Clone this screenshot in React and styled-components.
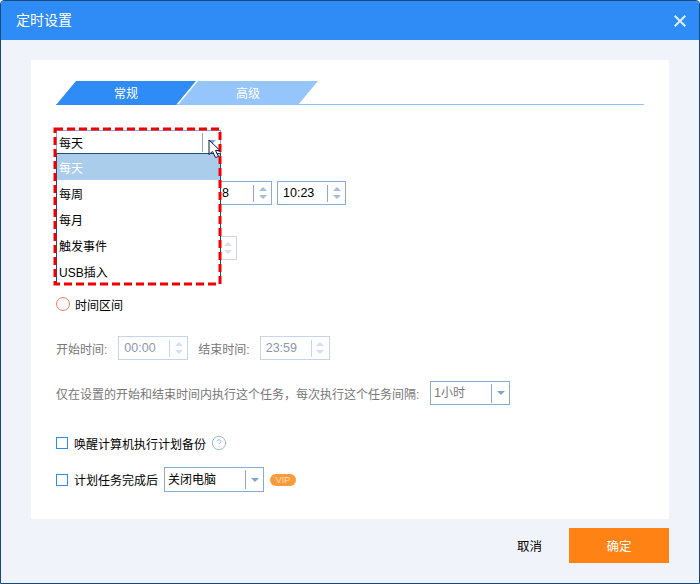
import React from "react";
import styled, { createGlobalStyle } from "styled-components";
import { CircleHelp } from "lucide-react";

const Global = createGlobalStyle`
  html, body { margin: 0; padding: 0; background: #fff; }
  body { font-family: "Liberation Sans", "Noto Sans CJK SC", sans-serif; font-size: 12px; color: #000; }
  * { box-sizing: border-box; }
`;

const Win = styled.div`
  width: 700px; height: 584px; display: flex; flex-direction: column;
  border: 1px solid #174a80; border-radius: 4px 4px 0 0; background: #f0f4fa; overflow: hidden;
`;
const TitleBar = styled.div`
  height: 39px; flex: none; background: #2f8bf6; color: #fff;
  display: flex; align-items: center; justify-content: space-between; padding: 0 13px 0 15px;
`;
const TitleText = styled.span`
  font-size: 14px; margin-top: -3px;
`;
const CloseIcon = styled.svg`
  width: 12px; height: 12px; display: block; margin-top: 1px;
`;
const Body = styled.div`
  flex: 1; display: flex; flex-direction: column; padding: 20px 30px 0;
`;
const Panel = styled.div`
  position: relative; height: 459px; flex: none; background: #fff; padding: 21px 25px 0;
`;
const Tabs = styled.div`
  display: flex; height: 24px; border-bottom: 1px solid #8fc1fa;
`;
const Tab = styled.div`
  width: 140px; height: 24px; flex: none; color: #fff; display: flex; align-items: center; justify-content: center;
  padding-bottom: 2px;
  background: ${p => (p.$active ? "#2f8bf6" : "#96c5fb")};
  clip-path: polygon(20px 0, 100% 0, 120px 100%, 0 100%);
  margin-left: ${p => (p.$active ? "0" : "-18px")};
`;
const SelectAnchor = styled.div`
  position: relative; width: 165px; height: 24px; margin-top: 25px;
`;
const Select = styled.div`
  display: flex; align-items: center; width: ${p => p.$w}px; height: ${p => p.$h || 24}px; flex: none;
  border: 1px solid #89a9d8; background: #fff; color: ${p => (p.$muted ? "#777" : "#000")};
  margin-left: ${p => p.$ml || 0}px; font-size: 12px;
`;
const SelectValue = styled.div`
  flex: 1; padding-left: ${p => p.$pl ?? 3}px; padding-top: ${p => p.$pt || 0}px; white-space: nowrap; line-height: 20px;
`;
const SelectSide = styled.div`
  width: ${p => p.$w || 19}px; height: 19px; flex: none; border-left: 1px solid #89a9d8;
  display: flex; align-items: center; justify-content: center;
`;
const Caret = styled.i`
  display: block; width: 0; height: 0; border-style: solid; border-width: 4px 4px 0 4px;
  border-color: #7fa3d7 transparent transparent transparent;
`;
const Dropdown = styled.div`
  position: absolute; left: 0; top: 23px; width: 165px; height: 131px; background: #fff;
  border: 1px solid #1f4e79; z-index: 2;
`;
const Option = styled.div`
  height: 26px; display: flex; align-items: center; padding-left: 2px; font-size: 12px;
  background: ${p => (p.$selected ? "#abcdec" : "#fff")};
  color: ${p => (p.$selected ? "#fff" : "#000")};
`;
const Marquee = styled.svg`
  position: absolute; left: 22px; top: 67px; width: 170px; height: 160px; z-index: 3; overflow: visible;
`;
const Cursor = styled.svg`
  position: absolute; left: 177px; top: 79px; width: 14px; height: 20px; z-index: 4; overflow: visible;
`;
const SpinRow = styled.div`
  display: flex; align-items: center; margin-top: ${p => p.$mt}px;
  margin-left: ${p => p.$ml || 0}px; gap: ${p => p.$gap || 0}px;
`;
const Spinner = styled.div`
  display: flex; align-items: center; height: 24px; width: ${p => p.$w}px; flex: none;
  border: 1px solid ${p => (p.$off ? "#c5d6ec" : "#89a9d8")}; background: #fff;
  color: ${p => (p.$off ? "#8d97ab" : "#000")};
  margin-left: ${p => p.$ml || 0}px;
`;
const SpinValue = styled.div`
  flex: 1; padding-left: ${p => p.$pl ?? 5}px;
  font-size: 12.5px; white-space: nowrap;
`;
const SpinSide = styled.div`
  width: 18px; height: 17px; flex: none; border-left: 1px solid ${p => (p.$off ? "#c5d6ec" : "#89a9d8")};
  display: flex; flex-direction: column; align-items: center; justify-content: center; gap: 4px;
`;
const Tri = styled.i`
  display: block; width: 0; height: 0; border-style: solid;
  border-width: ${p => (p.$up ? "0 4px 4px 4px" : "4px 4px 0 4px")};
  border-color: ${p => {
    const c = p.$off ? "#d4e0f0" : "#a3bde0";
    return p.$up ? `transparent transparent ${c} transparent` : `${c} transparent transparent transparent`;
  }};
`;
const RadioRow = styled.div`
  display: flex; align-items: center; gap: 5px; height: 14px; margin-top: 37px;
`;
const Radio = styled.span`
  width: 14px; height: 14px; border-radius: 50%; border: 1px solid #ff7a5c; background: #fff; flex: none;
`;
const Label = styled.span`
  color: ${p => (p.$muted ? "#777" : "#000")}; white-space: nowrap; font-size: 12px;
  margin-left: ${p => p.$ml || 0}px;
`;
const TimeRow = styled.div`
  display: flex; align-items: center; height: 24px; margin-top: ${p => p.$mt}px;
`;
const CheckRow = styled.div`
  display: flex; align-items: center; height: ${p => p.$h}px; margin-top: ${p => p.$mt}px;
`;
const Check = styled.span`
  width: 12px; height: 12px; border: 1px solid #2f8bf6; background: #fff; flex: none; margin-right: 6px;
`;
const Help = styled(CircleHelp)`
  width: 16px; height: 16px; margin-left: 5px; color: #9db7da; flex: none;
`;
const Vip = styled.span`
  width: 26px; height: 12px; border-radius: 6px; background: #ff9a3c; color: #ffe0b8; margin-left: 6px;
  font-size: 9px; line-height: 12px; text-align: center; flex: none;
`;
const Footer = styled.div`
  display: flex; align-items: center; justify-content: flex-end; margin-top: 9px; height: 35px;
`;
const CancelBtn = styled.button`
  border: 0; background: none; padding: 0; color: #000; font: inherit; font-size: 12.5px; margin-right: 27px;
`;
const OkBtn = styled.button`
  border: 0; width: 100px; height: 35px; background: #ff8214; color: #fff; font: inherit; font-size: 12.5px;
`;

const Spin = ({ value, w, off, ml, pl }) => (
  <Spinner $w={w} $off={off} $ml={ml}>
    <SpinValue $pl={pl}>{value}</SpinValue>
    <SpinSide $off={off}><Tri $up $off={off} /><Tri $off={off} /></SpinSide>
  </Spinner>
);

const Drop = ({ value, w, h, ml, muted, side, pl, pt }) => (
  <Select $w={w} $h={h} $ml={ml} $muted={muted}>
    <SelectValue $pl={pl} $pt={pt}>{value}</SelectValue>
    <SelectSide $w={side}><Caret /></SelectSide>
  </Select>
);

export default function App() {
  return (
    <Win>
      <Global />
      <TitleBar>
        <TitleText>定时设置</TitleText>
        <CloseIcon viewBox="0 0 12 12" aria-hidden="true">
          <path d="M0.7 0.7 L11.3 11.3 M11.3 0.7 L0.7 11.3" stroke="#d9eeff" strokeWidth="2" fill="none" />
        </CloseIcon>
      </TitleBar>
      <Body>
        <Panel>
          <Tabs>
            <Tab $active>常规</Tab>
            <Tab>高级</Tab>
          </Tabs>
          <SelectAnchor>
            <Drop value="每天" w={165} side={18} pl={2} pt={3} />
            <Dropdown>
              <Option $selected>每天</Option>
              <Option>每周</Option>
              <Option>每月</Option>
              <Option>触发事件</Option>
              <Option>USB插入</Option>
            </Dropdown>
          </SelectAnchor>
          <SpinRow $mt={27} $ml={146} $gap={5}>
            <Spin value="8" w={70} pl={19} />
            <Spin value="10:23" w={69} />
          </SpinRow>
          <SpinRow $mt={31} $ml={112}>
            <Spin w={69} off />
          </SpinRow>
          <RadioRow>
            <Radio />
            <Label>时间区间</Label>
          </RadioRow>
          <TimeRow $mt={25}>
            <Label $muted>开始时间:</Label>
            <Spin value="00:00" w={70} off ml={11} />
            <Label $muted $ml={10}>结束时间:</Label>
            <Spin value="23:59" w={70} off ml={10} />
          </TimeRow>
          <TimeRow $mt={21}>
            <Label $muted>仅在设置的开始和结束时间内执行这个任务，每次执行这个任务间隔:</Label>
            <Drop value="1小时" w={80} ml={11} muted side={18} />
          </TimeRow>
          <CheckRow $h={14} $mt={31}>
            <Check />
            <Label>唤醒计算机执行计划备份</Label>
            <Help strokeWidth={1.5} />
          </CheckRow>
          <CheckRow $h={25} $mt={17}>
            <Check />
            <Label>计划任务完成后</Label>
            <Drop value="关闭电脑" w={100} h={25} ml={6} side={18} />
            <Vip>VIP</Vip>
          </CheckRow>
          <Marquee viewBox="0 0 170 160" aria-hidden="true">
            <rect x="2" y="2" width="165" height="155" fill="none" stroke="#f00000" strokeWidth="3" strokeDasharray="8 4" />
          </Marquee>
          <Cursor viewBox="0 0 14 20" aria-hidden="true">
            <path d="M1 1 V15.5 L4.5 12.5 L7.5 18.5 L10.5 17.5 L7.5 11.5 L12 11.5 Z" fill="#fff" stroke="#14143c" strokeWidth="1" />
          </Cursor>
        </Panel>
        <Footer>
          <CancelBtn>取消</CancelBtn>
          <OkBtn>确定</OkBtn>
        </Footer>
      </Body>
    </Win>
  );
}
